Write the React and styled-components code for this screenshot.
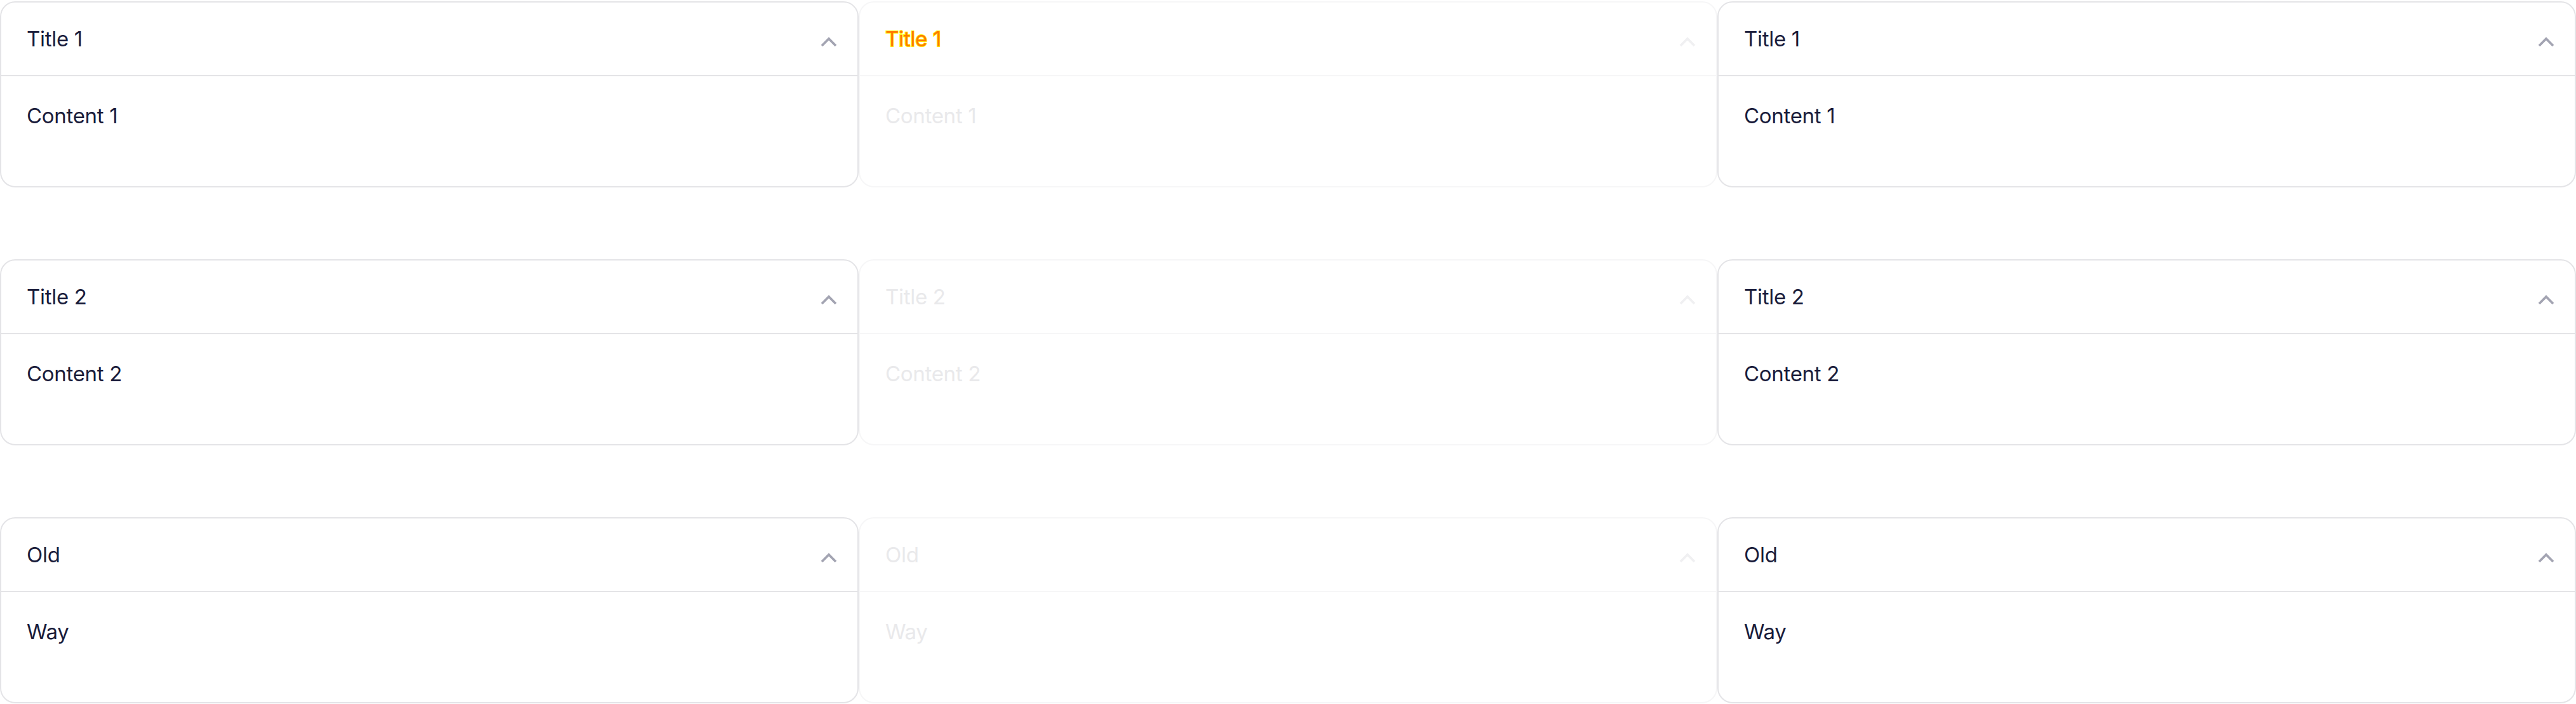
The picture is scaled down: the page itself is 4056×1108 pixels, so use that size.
import React from "react";
import styled, { createGlobalStyle, css } from "styled-components";

const GlobalStyle = createGlobalStyle`
  html, body {
    margin: 0;
    padding: 0;
    background: #ffffff;
  }
  body {
    font-family: Inter, "Noto Sans", "Liberation Sans", sans-serif;
  }
`;

const items = [
  { title: "Title 1", content: "Content 1" },
  { title: "Title 2", content: "Content 2" },
  { title: "Old", content: "Way" },
];

const Accordion = ({ title, content, faded, diff }) => {
  return (
    <Card $faded={faded}>
      <Header $faded={faded}>
        <Title $faded={faded} $diff={diff}>
          {title}
        </Title>
        <Chevron $faded={faded} viewBox="0 0 26 16" width="26" height="16">
          <polyline points="2,14 13,3 24,14" />
        </Chevron>
      </Header>
      <Body $faded={faded}>{content}</Body>
    </Card>
  );
};

const App = () => {
  return (
    <>
      <GlobalStyle />
      <Page>
        {items.map((item, i) => (
          <React.Fragment key={item.title}>
            <Accordion title={item.title} content={item.content} />
            <Accordion
              title={item.title}
              content={item.content}
              faded
              diff={i === 0}
            />
            <Accordion title={item.title} content={item.content} />
          </React.Fragment>
        ))}
      </Page>
    </>
  );
};

const Page = styled.div`
  display: grid;
  grid-template-columns: repeat(3, 1352px);
  grid-auto-rows: 293px;
  row-gap: 113px;
  padding-top: 2px;
  width: 4056px;
`;

const Card = styled.div`
  display: flex;
  flex-direction: column;
  box-sizing: border-box;
  border: 2px solid ${(p) => (p.$faded ? "#f6f6f7" : "#e4e4e7")};
  border-radius: 24px;
  background: #ffffff;
  overflow: hidden;
`;

const Header = styled.div`
  display: flex;
  align-items: center;
  justify-content: space-between;
  height: 114px;
  padding: 0 32px 0 40px;
  border-bottom: 2px solid ${(p) => (p.$faded ? "#f6f6f7" : "#e4e4e7")};
`;

const Title = styled.span`
  font-size: 33px;
  line-height: 40px;
  letter-spacing: -0.3px;
  color: ${(p) => (p.$faded ? "#e9e9eb" : "#1a1c3b")};

  ${(p) =>
    p.$diff &&
    css`
      color: #ff7a00;
      -webkit-text-stroke: 2px #ffee00;
      paint-order: stroke fill;
    `}
`;

const Chevron = styled.svg`
  margin-top: 9px;
  flex-shrink: 0;

  polyline {
    fill: none;
    stroke: ${(p) => (p.$faded ? "#f0f0f2" : "#a3a4b2")};
    stroke-width: 3.8;
    stroke-linecap: butt;
    stroke-linejoin: miter;
  }
`;

const Body = styled.div`
  flex: 1;
  padding: 42px 40px 0;
  font-size: 33px;
  line-height: 40px;
  letter-spacing: -0.3px;
  color: ${(p) => (p.$faded ? "#e9e9eb" : "#1a1c3b")};
`;

export default App;
